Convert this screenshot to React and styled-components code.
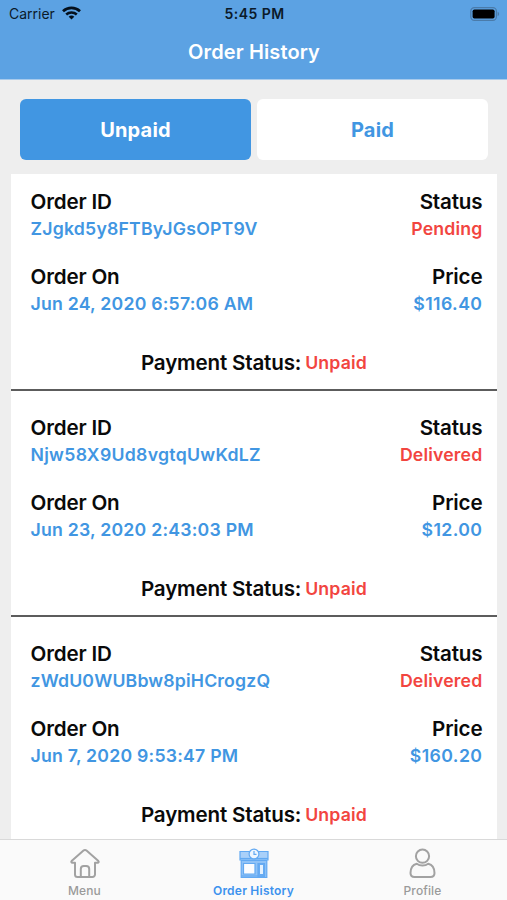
import React from "react";
import styled, { createGlobalStyle } from "styled-components";

const BLUE = "#4196e2";
const RED = "#f2453f";

const GlobalStyle = createGlobalStyle`
  *, *::before, *::after { box-sizing: border-box; }
  html, body { margin: 0; padding: 0; }
  body {
    font-family: Inter, "Liberation Sans", sans-serif;
    background: #eee;
    overflow: hidden;
  }
  button { font: inherit; border: 0; margin: 0; padding: 0; }
`;

const Screen = styled.div`
  display: flex;
  flex-direction: column;
  width: 507px;
  height: 900px;
  background: #eeeeee;
  overflow: hidden;
`;

const Header = styled.header`
  flex: none;
  height: 80px;
  background: #5ca2e3;
  border-bottom: 1px solid #a9cbec;
`;

const StatusBar = styled.div`
  display: grid;
  grid-template-columns: 1fr auto 1fr;
  align-items: center;
  height: 27px;
  padding: 0 7px 0 9px;
  font-size: 14px;
  line-height: 20px;
  color: #0b1a2a;
`;

const Carrier = styled.div`
  display: flex;
  align-items: center;
  gap: 7px;

  svg { margin-top: -2px; }
`;

const Clock = styled.div`
  font-weight: 600;
  letter-spacing: 0.45px;
`;

const BatterySlot = styled.div`
  display: flex;
  justify-content: flex-end;
`;

const Title = styled.h1`
  margin: 0;
  height: 52px;
  padding-left: 1px;
  line-height: 51px;
  text-align: center;
  font-size: 20px;
  font-weight: 600;
  letter-spacing: 0.12px;
  color: #fff;
`;

const Segments = styled.div`
  flex: none;
  display: grid;
  grid-template-columns: 1fr 1fr;
  gap: 6px;
  padding: 18.6px 19px 14px 20px;
`;

const Segment = styled.button`
  height: 61.4px;
  padding-top: 1px;
  border-radius: 6px;
  font-size: 20px;
  font-weight: 700;
  letter-spacing: 0.2px;
  color: ${(p) => (p.$active ? "#fff" : BLUE)};
  background: ${(p) => (p.$active ? BLUE : "#fff")};
`;

const List = styled.main`
  flex: 1;
  min-height: 0;
  overflow: hidden;
  margin: 0 10px 0 11px;
  background: #fff;
`;

const Order = styled.article`
  height: 226px;
  margin-top: ${(p) => (p.$first ? "-9px" : "0")};
  padding: 23px 14.6px 0 19.5px;
  border-bottom: 2px solid #5c5c5c;
`;

const Row = styled.div`
  display: flex;
  justify-content: space-between;
  margin-bottom: 21px;
`;

const Field = styled.div`
  display: flex;
  flex-direction: column;
  align-items: ${(p) => (p.$end ? "flex-end" : "flex-start")};
`;

const Label = styled.span`
  font-size: 20.6px;
  line-height: 27px;
  font-weight: 600;
  letter-spacing: -0.17px;
  color: #0a0a0a;
`;

const Value = styled.span`
  font-size: 17.7px;
  line-height: 27px;
  font-weight: 600;
  letter-spacing: ${(p) => p.$track ?? 0.22}px;
  color: ${(p) => (p.$alert ? RED : BLUE)};
`;

const Payment = styled.div`
  display: flex;
  justify-content: center;
  gap: 4px;
  margin-top: 32px;
  padding-right: 5px;
`;

const TabBar = styled.nav`
  flex: none;
  display: grid;
  grid-template-columns: repeat(3, 1fr);
  height: 61px;
  background: #fafafa;
  border-top: 1px solid #d9d9d9;
`;

const Tab = styled.button`
  display: flex;
  flex-direction: column;
  align-items: center;
  padding-top: 8px;
  background: none;
  font-size: 12px;
  line-height: 16px;
  font-weight: ${(p) => (p.$active ? 600 : 500)};
  letter-spacing: ${(p) => (p.$active ? 0.22 : 0.12)}px;
  color: ${(p) => (p.$active ? "#3d92ee" : "#9a9a9a")};

  svg { display: block; margin-bottom: 3px; }
`;

const WifiIcon = () => (
  <svg width="19" height="14" viewBox="0 0 19 14" fill="none" stroke="#05101c">
    <path d="M1 5.2C5.8.7 13.2.7 18 5.2" strokeWidth="2.7" />
    <path d="M4.2 8.5c3-2.8 7.6-2.8 10.6 0" strokeWidth="2.5" />
    <path d="M9.5 13.5 6.7 10.7c1.6-1.5 4-1.5 5.6 0Z" fill="#05101c" stroke="none" />
  </svg>
);

const BatteryIcon = () => (
  <svg width="30" height="14" viewBox="0 0 30 14">
    <rect x="0.8" y="0.6" width="25.6" height="12.8" rx="3.6" fill="none" stroke="#4a7baa" strokeWidth="1.2" />
    <rect x="2.6" y="2.4" width="22" height="9.2" rx="1.8" fill="#000" />
    <path d="M27.6 4.8c2 .7 2 3.700 0 4.400Z" fill="#4a7baa" />
  </svg>
);

const HomeIcon = () => (
  <svg width="32" height="32" viewBox="0 0 32 32" fill="none" stroke="#a2a2a2" strokeWidth="2" strokeLinejoin="round" strokeLinecap="round">
    <path d="M6 14.8H3.3a1 1 0 0 1-.7-1.7L14.5 2.600a2.300 2.300 0 0 1 3 0L29.400 13.100a1 1 0 0 1-.7 1.700H26V26.500a2.500 2.500 0 0 1-2.500 2.500H8.500A2.500 2.500 0 0 1 6 26.500Z" />
    <path d="M11.800 29V21a3 3 0 0 1 3-3h2.400a3 3 0 0 1 3 3V29" />
  </svg>
);

const StoreIcon = () => (
  <svg width="32" height="32" viewBox="0 0 32 32" fill="none" stroke="#62a9f2" strokeWidth="1.2">
    <path d="M2 3.5H30V12H2Z" fill="#a9d0f9" />
    <path d="M2 10.5H30" />
    <path d="M3.2 12.5H28.8V29.5H3.2Z" fill="#8fc2f7" />
    <path d="M5.5 15.5H17V26H5.5Z" fill="#fafcff" />
    <path d="M20 15.5H26.5V29H20Z" fill="#66abf3" />
    <path d="M22 17H25V26H22Z" fill="#e4f1fe" stroke="none" />
    <path d="M3.2 28H20" />
    <circle cx="16" cy="6" r="4.9" fill="#edf6ff" />
    <path d="M16 3v3.3h2.5" />
  </svg>
);

const ProfileIcon = () => (
  <svg width="32" height="32" viewBox="0 0 32 32" fill="none" stroke="#a2a2a2" strokeWidth="2">
    <circle cx="15.5" cy="8.2" r="6.6" />
    <path d="M9.8 15.8C5.7 16.8 3.500 20.600 3.500 25.100c0 2.700 1.700 4 4 4h16c2.300 0 4-1.300 4-4 0-4.500-2.200-8.300-6.300-9.300-3 2.400-8.400 2.400-11.400 0Z" strokeLinejoin="round" />
  </svg>
);

const orders = [
  { id: "ZJgkd5y8FTByJGsOPT9V", status: "Pending", date: "Jun 24, 2020 6:57:06 AM", price: "$116.40", idTrack: 0.2 },
  { id: "Njw58X9Ud8vgtqUwKdLZ", status: "Delivered", date: "Jun 23, 2020 2:43:03 PM", price: "$12.00", idTrack: 0.28 },
  { id: "zWdU0WUBbw8piHCrogzQ", status: "Delivered", date: "Jun 7, 2020 9:53:47 PM", price: "$160.20", idTrack: 0.16 },
];

export default function App() {
  return (
    <Screen>
      <GlobalStyle />
      <Header>
        <StatusBar>
          <Carrier>Carrier<WifiIcon /></Carrier>
          <Clock>5:45 PM</Clock>
          <BatterySlot><BatteryIcon /></BatterySlot>
        </StatusBar>
        <Title>Order History</Title>
      </Header>
      <Segments>
        <Segment $active>Unpaid</Segment>
        <Segment>Paid</Segment>
      </Segments>
      <List>
        {orders.map((o, i) => (
          <Order key={o.id} $first={i === 0}>
            <Row>
              <Field>
                <Label>Order ID</Label>
                <Value $track={o.idTrack}>{o.id}</Value>
              </Field>
              <Field $end>
                <Label>Status</Label>
                <Value $alert $track={0.15}>{o.status}</Value>
              </Field>
            </Row>
            <Row>
              <Field>
                <Label>Order On</Label>
                <Value>{o.date}</Value>
              </Field>
              <Field $end>
                <Label>Price</Label>
                <Value $track={0.4}>{o.price}</Value>
              </Field>
            </Row>
            <Payment>
              <Label>Payment Status:</Label>
              <Value $alert $track={0.15}>Unpaid</Value>
            </Payment>
          </Order>
        ))}
      </List>
      <TabBar>
        <Tab><HomeIcon />Menu</Tab>
        <Tab $active><StoreIcon />Order History</Tab>
        <Tab><ProfileIcon />Profile</Tab>
      </TabBar>
    </Screen>
  );
}
